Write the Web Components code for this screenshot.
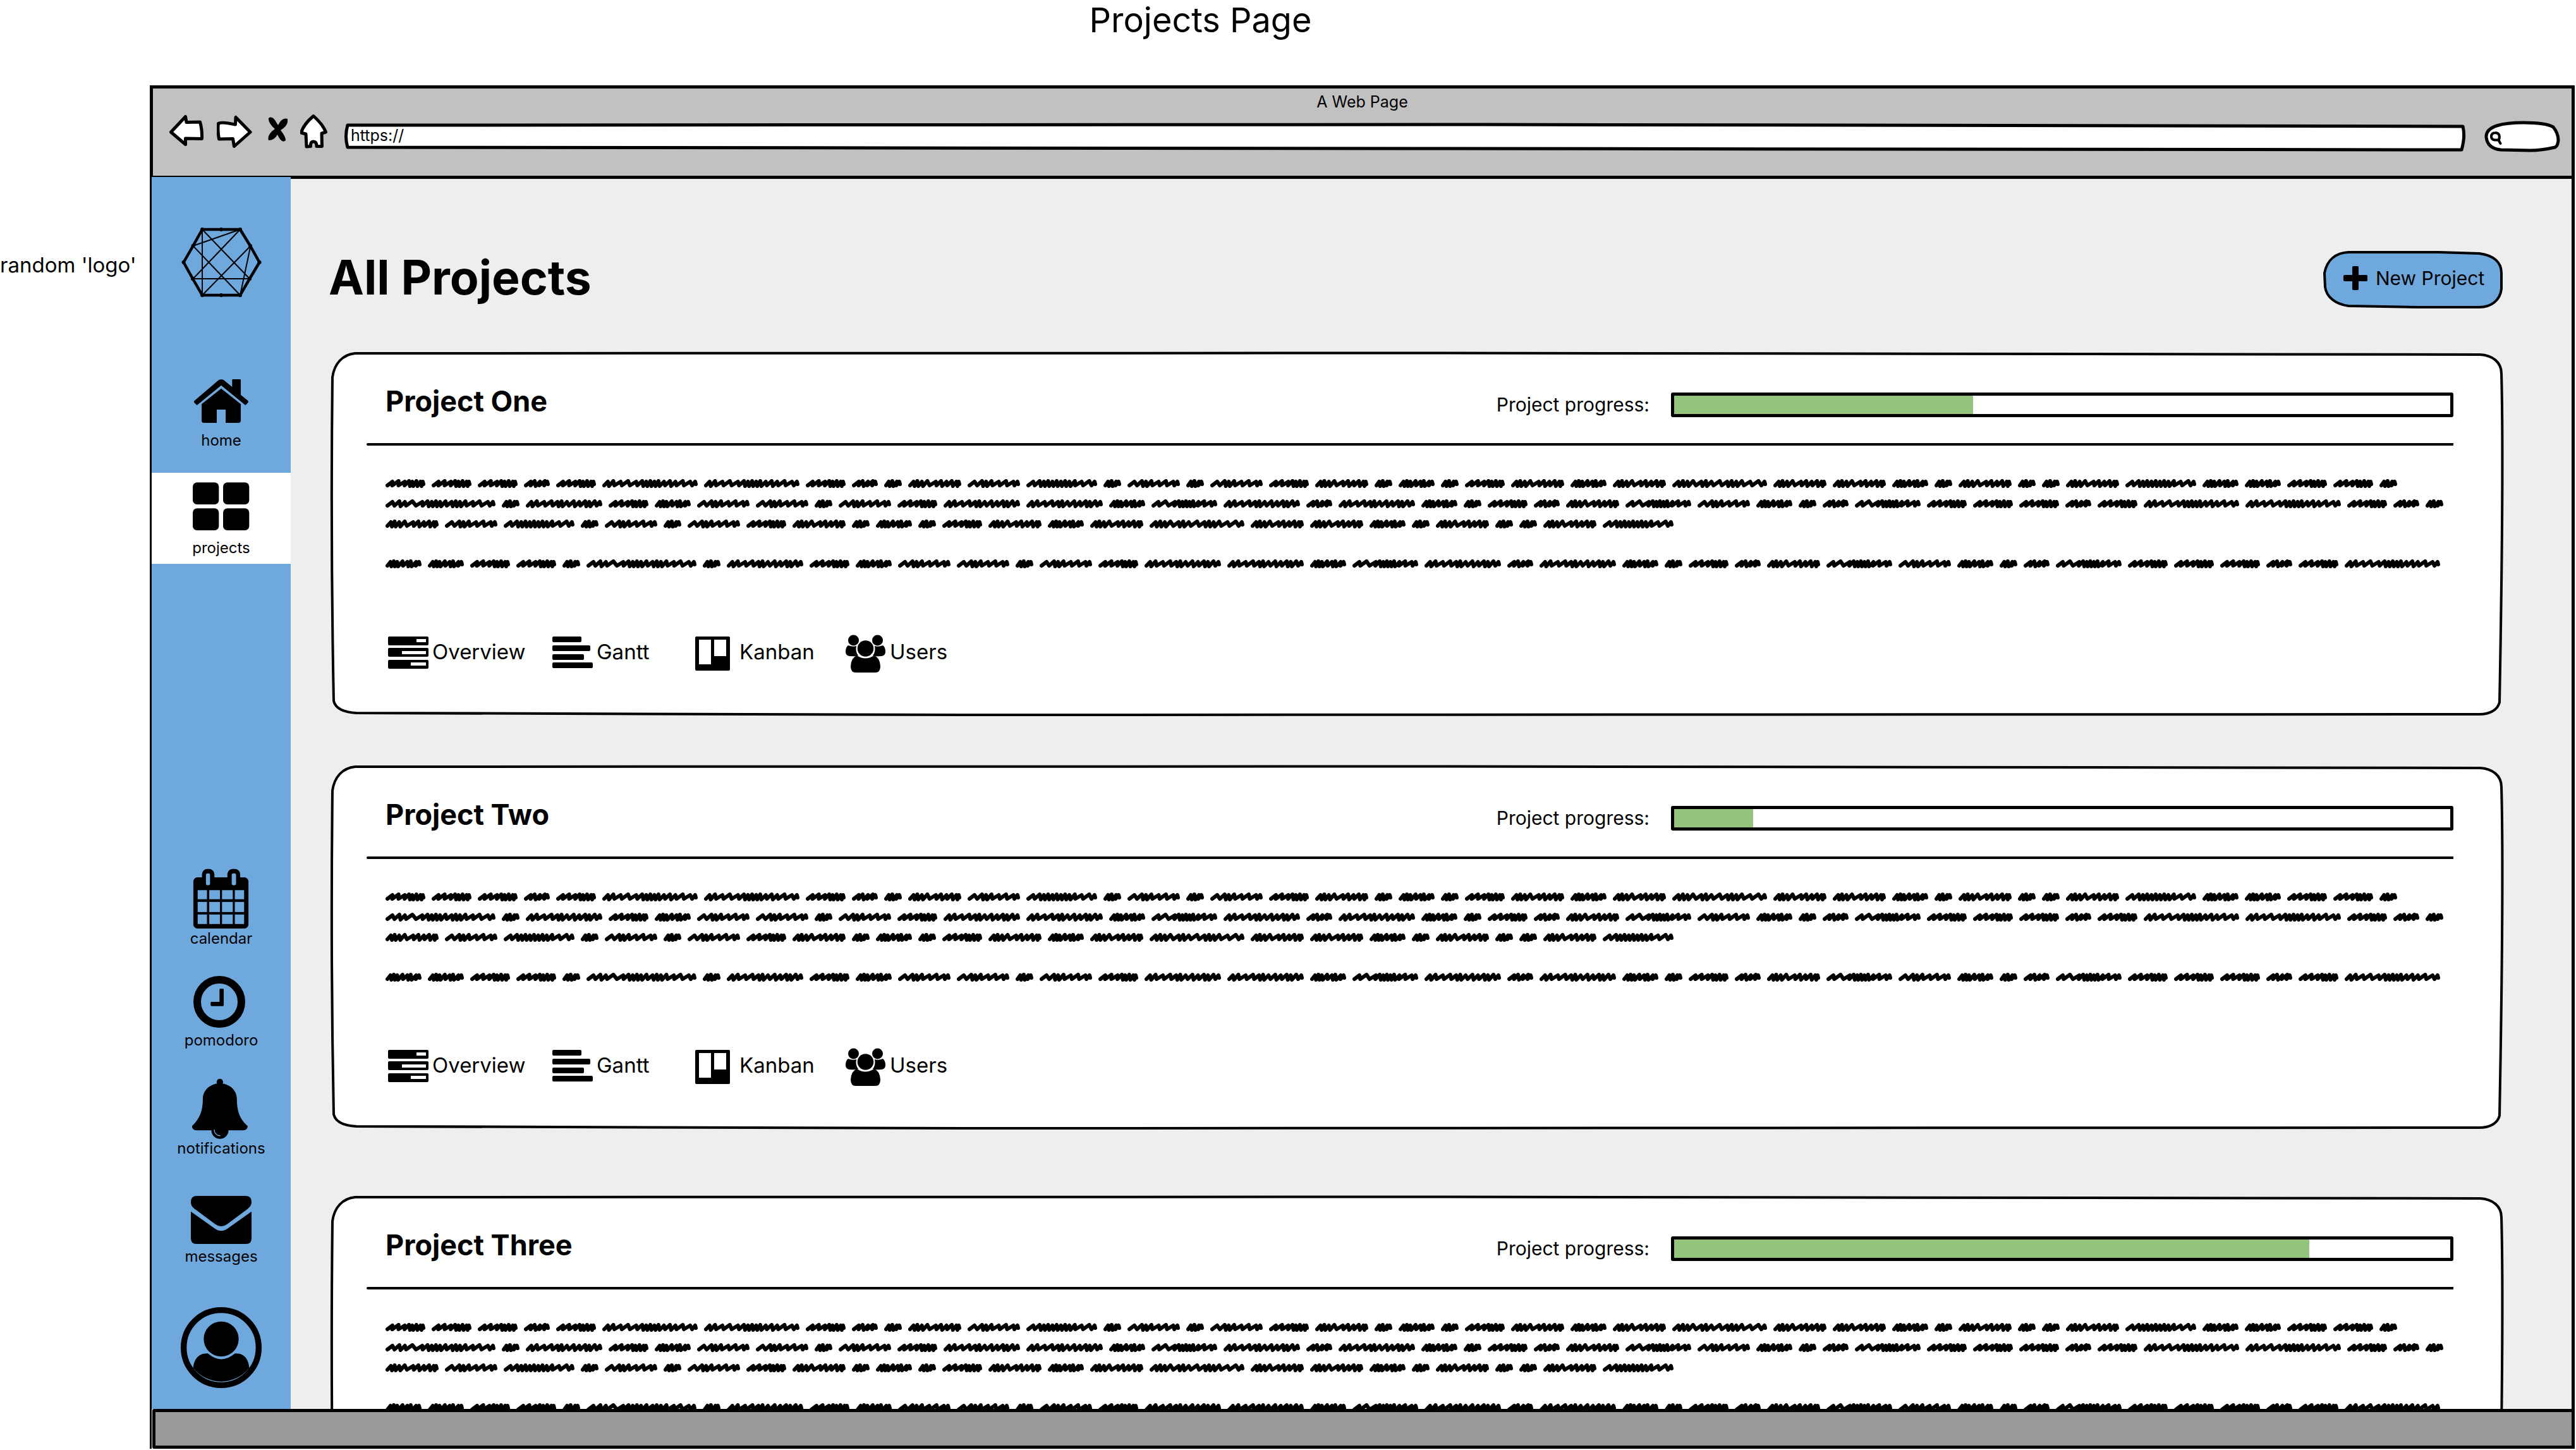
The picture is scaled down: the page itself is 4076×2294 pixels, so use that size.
<!DOCTYPE html>
<html lang="en">
<head>
<meta charset="utf-8">
<title>Projects Page</title>
<style>
  body { margin: 0; background: #fff; color: #000; font-family: Inter, "Liberation Sans", sans-serif; }
</style>
</head>
<body>
<wire-board heading="Projects Page" note="random 'logo'">
  <browser-window caption="A Web Page" address="https://">
    <side-nav slot="side"></side-nav>
    <page-heading text="All Projects"></page-heading>
    <project-card name="Project One" progress="38.5"></project-card>
    <project-card name="Project Two" progress="10.2"></project-card>
    <project-card class="later" name="Project Three" progress="81.8" preview></project-card>
  </browser-window>
</wire-board>

<script>
const BASE = `
  *, *::before, *::after { box-sizing: border-box; }
  svg { display: block; }
  a { color: inherit; text-decoration: none; }
  button, input { font: inherit; color: inherit; background: none; border: 0; margin: 0; padding: 0; }
`;

class Base extends HTMLElement {
  connectedCallback() {
    if (this.shadowRoot) return;
    this.attachShadow({ mode: 'open' }).innerHTML = `<style>${BASE}${this.css()}</style>${this.html()}`;
  }
  attr(name) { return this.getAttribute(name) || ''; }
}

/* Outline drawn behind slotted content; the shape stretches with its box. */
const FRAMES = {
  card: { box: '0 0 3436 575', line: 4, fill: '#fff',
    d: 'M38 2 L1700 1.5 L3400 4 C3420 5 3434 16 3434 34 Q3438 180 3431 554 C3428 566 3416 573 3399 573 L1000 574 L40 571 C20 570 7 564 4 552 Q-1 300 2 40 C5 18 18 4 38 2 Z' },
  button: { box: '0 0 284 91', line: 4, fill: '#6fa8dc',
    d: 'M40 2 L183 2 L247 4 C270 7 282 18 282 35 L282 60 C280 78 266 89 247 89 L150 89 L40 87 C18 84 5 72 3 57 L2 35 C6 14 20 3 40 2 Z' },
  url: { box: '0 0 3356 46', line: 5, fill: '#fff',
    d: 'M5 4 L1800 3 L3352 6 Q3356 22 3350 43 L1700 41 L5 39 Q0 22 5 4 Z' },
  search: { box: '0 0 119 49', line: 5, fill: '#fff',
    d: 'M3 26 C2 8 30 3 62 3 C84 3 100 5 109 10 Q117 20 117 31 Q116 40 112 42 Q90 47 72 47 L26 46 Q5 44 3 26 Z' }
};
class SketchFrame extends Base {
  css() { return `
    :host { display: block; position: relative; }
    svg { position: absolute; inset: 0; width: 100%; height: 100%; overflow: visible; }
    .in { position: relative; height: 100%; }`; }
  html() {
    const f = FRAMES[this.attr('shape')];
    return `<svg viewBox="${f.box}" preserveAspectRatio="none" aria-hidden="true">
      <path d="${f.d}" fill="${f.fill}" stroke="#000" stroke-width="${f.line}" stroke-linejoin="round" vector-effect="non-scaling-stroke"/></svg>
      <div class="in"><slot></slot></div>`;
  }
}

/* Placeholder copy: every letter names a scribbled word, given as width and stroke pitches. */
const WORDS = {
  a: [28, [5, 6, 8]],
  n: [41, [10, 5, 9, 8]],
  c: [57, [5, 5, 5, 10, 5, 5, 9]],
  w: [63, [9, 9, 9, 5, 5, 6, 6]],
  s: [83, [11, 5, 5, 9, 9, 9, 9]],
  d: [84, [5, 5, 6, 11, 9, 5, 9, 5, 6]],
  f: [104, [10, 13, 8, 5, 5, 5, 5, 5, 8, 9, 10]],
  g: [112, [9, 5, 5, 5, 5, 5, 5, 5, 5, 8, 9, 10]],
  h: [121, [5, 9, 9, 9, 5, 5, 10, 5, 9, 5, 5, 10]],
  p: [151, [5, 9, 9, 10, 9, 5, 5, 5, 5, 5, 9, 5, 9, 9, 10]],
  q: [150, [5, 5, 5, 10, 5, 5, 9, 9, 5, 5, 5, 9, 9, 10]],
  r: [174, [10, 5, 9, 12, 8, 5, 5, 5, 5, 9, 5, 5, 5, 9, 8, 10, 10]]
};
function scribble(key) {
  const [w, steps] = WORDS[key];
  const k = (w - 10) / steps.reduce((a, b) => a + b, 0);
  let x = 3, d = 'M3 10';
  steps.forEach((s, i) => {
    const p = s * k, dense = s < 7;
    const top = x + Math.min(p * 0.9, 8);
    d += ` L${top.toFixed(1)} ${i % 2 ? 3 : 4}`;
    x += p;
    d += ` L${(x + (dense ? 1 : -2)).toFixed(1)} ${dense ? 11 : 10}`;
  });
  d += ` L${w - 4} 4 L${w - 3} 8`;
  return `<svg width="${w}" height="14" viewBox="0 0 ${w} 14"><path d="${d}" fill="none" stroke="#000" stroke-width="6" stroke-linejoin="round" stroke-linecap="round"/></svg>`;
}
class ScribbleText extends Base {
  css() { return `:host { display: flex; flex-wrap: wrap; gap: 18px 10px; }`; }
  html() { return [...this.attr('words')].map(scribble).join(''); }
}

class WireBoard extends Base {
  css() { return `
    :host { display: flex; flex-direction: column; height: 100vh; overflow: hidden; }
    h1 { margin: 0; height: 135px; flex: none; padding-right: 277px; text-align: center; font-size: 54px; line-height: 64px; font-weight: 400; }
    .row { flex: 1; min-height: 0; display: flex; padding: 0 2px 2px 0; }
    p { margin: 0; flex: none; width: 237px; padding-top: 264px; font-size: 33px; line-height: 40px; white-space: nowrap; }
    ::slotted(*) { flex: 1; min-width: 0; }`; }
  html() { return `<h1>${this.attr('heading')}</h1><div class="row"><p>${this.attr('note')}</p><slot></slot></div>`; }
}

class BrowserWindow extends Base {
  css() { return `
    :host { display: flex; flex-direction: column; border: solid #000; border-width: 5px 5px 0 3px; background: #eee; }
    header { flex: none; height: 143px; background: #c1c1c1; border: solid #000; border-width: 0 0 5px 2px; }
    .cap { padding: 4px 0 2px; text-align: center; font-size: 25px; line-height: 34px; }
    .nav { display: flex; align-items: flex-end; gap: 20px; height: 60px; padding: 0 19px 0 26px; }
    .nav button { flex: none; display: block; }
    .nav .url { flex: 1; height: 46px; }
    .nav .find { flex: none; width: 119px; height: 49px; margin-left: 10px; }
    .find svg { position: absolute; left: 8px; top: 16px; }
    input { display: block; width: 100%; height: 100%; outline: 0; font-size: 25px; padding: 0 10px 7px; }
    .find input { padding-left: 32px; }
    .body { flex: 1; min-height: 0; display: flex; }
    ::slotted([slot=side]) { flex: none; width: 220px; margin-top: -3px; position: relative; }
    main { flex: 1; min-width: 0; overflow: hidden; padding: 114px 109px 0 64px; display: flex; flex-direction: column; gap: 79px; }
    main ::slotted(*) { flex: none; }
    main ::slotted(.later) { margin-top: 27px; }
    footer { flex: none; height: 63px; margin: 0 -5px 0 1px; border: 5px solid #000; border-radius: 3px; background: #999; position: relative; }`; }
  html() { return `
    <header>
      <div class="cap">${this.attr('caption')}</div>
      <div class="nav">
        <button aria-label="Back"><svg width="55" height="60" viewBox="268 180 55 60"><path d="M270.5 209 L293.5 184.5 L295 193.5 L316.5 193 Q320 205 319.5 219.5 L293.5 219 L293.5 228.500 Z" fill="#fff" stroke="#000" stroke-width="5" stroke-linejoin="round"/></svg></button>
        <button aria-label="Forward"><svg width="61" height="60" viewBox="343 180 61 60"><path d="M396 209 L373 185.500 L372.500 197 Q350 192 345.500 195.500 Q344 205 346.500 220 L368.500 219.500 L370.500 231.500 Z" fill="#fff" stroke="#000" stroke-width="5" stroke-linejoin="round"/></svg></button>
        <button aria-label="Stop"><svg width="31" height="60" viewBox="424 180 31 60"><path d="M425 187 Q431 182 438 195 L440 198 Q446 185 455 188 Q457 198 444 206 Q452 216 452 222 Q446 228 439 213 Q434 222 425 222 Q422 213 435 204 Q424 194 425 187Z"/></svg></button>
        <button aria-label="Home"><svg width="50" height="60" viewBox="475 180 50 60"><path d="M496 183.500 Q511 197 515.500 209 L509 211 L509.500 231.500 L501 231.500 Q501 224 496 224 Q491 224 491.500 231.500 L485 232 L484 212 L476.500 210 Q480 197 496 183.500 Z" fill="#fff" stroke="#000" stroke-width="5" stroke-linejoin="round"/></svg></button>
        <sketch-frame class="url" shape="url"><input type="text" aria-label="Address" value="${this.attr('address')}"></sketch-frame>
        <sketch-frame class="find" shape="search"><svg width="22" height="24" viewBox="0 0 22 24" aria-hidden="true"><path d="M10 3 C4 3 3 6 3 9 C3 14 7 15 15 14.500 Q18 4 10 3 M14 14 L17.500 20" fill="none" stroke="#000" stroke-width="4" stroke-linecap="round" stroke-linejoin="round"/></svg><input type="search" aria-label="Search"></sketch-frame>
      </div>
    </header>
    <div class="body"><slot name="side"></slot><main><slot></slot></main></div>
    <footer></footer>`; }
}

class NavItem extends Base {
  css() { return `
    :host { display: block; }
    a { display: flex; flex-direction: column; align-items: center; padding: 8px 0 10px; font-size: 24px; line-height: 30px; }
    a[aria-current] { background: #fff; }`; }
  html() { return `<a href="#${this.attr('label')}" ${this.hasAttribute('current') ? 'aria-current="page"' : ''}><slot></slot><span>${this.attr('label')}</span></a>`; }
}

class SideNav extends Base {
  css() {
    return `
    :host { display: flex; flex-direction: column; background: #6fa8dc; padding: 79px 0 33px; }
    .logo { margin: 0 auto 107px; }
    nav { display: flex; flex-direction: column; gap: 27px; }
    .top { gap: 26px; }
    .low { margin-top: auto; }
    .low nav-item:first-child { margin-bottom: -10px; }
    .me { margin: 55px auto 0; }`; }
  html() {
    let cells = '';
    for (const [x, w] of [[246, 45], [302, 52], [364, 52], [426, 45]])
      for (const [y, h] of [[177, 44], [234, 49], [295, 46]])
        cells += `<rect x="${x}" y="${y}" width="${w}" height="${h}"/>`;
    return `
    <svg class="logo" width="128" height="112" viewBox="285 359 128 112" fill="none" stroke="#000" stroke-linejoin="round">
      <path stroke-width="2" d="M319 363 V467 M319 363 L394 441 M379 363 L304.500 389 M379 363 L304.500 441 M304.500 389 L379 467 M395.500 389 L319 467 M395.500 389 L379 467 M304.500 441 H394"/>
      <path stroke-width="4.500" d="M319 363 H379 L395 389 L409.500 415 L394 441 L379 467 H319 L304 441 L289.500 415 L304.500 389 Z"/>
      <path stroke-width="6" stroke-linecap="round" d="M319 363h0M349 363h0M379 363h0M395 389h0M409.500 415h0M394 441h0M379 467h0M349 467h0M319 467h0M304 441h0M289.500 415h0M304.500 389h0"/>
    </svg>
    <nav class="top" aria-label="Main">
      <nav-item label="home"><svg width="96" height="96" viewBox="216 78 288 288"><path d="M232 223 L348 124 Q360 117 372 124 L412 157 V124 Q412 120 416 120 H449 Q453 120 453 124 V194 L487 222 Q491 226 487 231 L479 240 Q475 244 471 240 L360 149 L249 240 Q245 244 241 240 L232 231 Q229 227 232 223Z"/><path d="M360 164 L453 238 V316 Q453 327 442 327 H381 V264 H339 V327 H277 Q267 327 267 316 V238Z"/></svg></nav-item>
      <nav-item label="projects" current><svg width="96" height="96" viewBox="216 588 288 288"><rect x="225" y="610" width="124" height="104" rx="20"/><rect x="369" y="610" width="124" height="104" rx="20"/><rect x="225" y="733" width="124" height="104" rx="20"/><rect x="369" y="733" width="124" height="104" rx="20"/></svg></nav-item>
    </nav>
    <nav class="low" aria-label="Tools">
      <nav-item label="calendar"><svg width="96" height="96" viewBox="216 72 288 294"><rect x="225" y="115" width="267" height="248" rx="20"/><rect x="267" y="74" width="60" height="90" rx="26"/><rect x="390" y="74" width="62" height="90" rx="26"/><g fill="#6fa8dc"><rect x="286" y="96" width="20" height="57" rx="8"/><rect x="411" y="96" width="21" height="57" rx="8"/>${cells}</g></svg></nav-item>
      <nav-item label="pomodoro"><svg width="96" height="96" viewBox="216 555 288 288"><circle cx="351" cy="705" r="105" fill="none" stroke="#000" stroke-width="36"/><path d="M356 643 H368 Q372 643 372 647 V721 Q372 725 368 725 H314 Q310 725 310 721 V709 Q310 705 314 705 H352 V647 Q352 643 356 643Z"/></svg></nav-item>
      <nav-item label="notifications"><svg width="96" height="96" viewBox="216 1068 288 291"><circle cx="353.500" cy="1086" r="15.500"/><path d="M272 1165 C272 1125 308 1092 353 1092 C400 1092 435 1125 435 1165 C435 1230 452 1267 487 1297 Q487 1317 466 1317 H241 Q220 1317 220 1297 C255 1262 272 1230 272 1165Z"/><circle cx="354" cy="1317" r="41"/><path d="M327 1314 A27 27 0 0 0 356 1343" fill="none" stroke="#6fa8dc" stroke-width="4"/></svg></nav-item>
      <nav-item label="messages"><svg width="96" height="96" viewBox="210 81 288 288"><path d="M210 156 Q210 126 236 126 H472 Q498 126 498 156 C498 170 488 182 474 192 L382 260 Q354 281 326 260 L234 192 C218 182 210 170 210 156Z"/><path d="M210 200 L322 280 Q354 304 386 280 L498 200 V328 Q498 354 472 354 H236 Q210 354 210 328Z"/></svg></nav-item>
    </nav>
    <a class="me" href="#profile" aria-label="Profile"><svg width="128" height="128" viewBox="162 654 384 384"><circle cx="354" cy="846" r="178" fill="none" stroke="#000" stroke-width="28"/><circle cx="354" cy="805" r="83"/><path d="M221 943 C224 905 245 870 291 874 Q354 929 419 874 C465 870 485 905 487 943 A170 170 0 0 1 221 943Z"/></svg></a>`;
  }
}

class PageHeading extends Base {
  css() { return `
    :host { display: flex; justify-content: space-between; align-items: flex-start; margin: 0 0 -10px -4px; }
    h2 { margin: 0; font-size: 75px; line-height: 84px; font-weight: 700; }
    sketch-frame { width: 284px; height: 91px; }
    button { display: flex; align-items: center; gap: 13px; width: 100%; height: 100%; padding: 0 0 5px 32px; font-size: 30px; white-space: nowrap; }`; }
  html() { return `<h2>${this.attr('text')}</h2>
    <sketch-frame shape="button"><button><svg width="38" height="38" viewBox="0 0 38 38" aria-hidden="true"><rect y="14" width="38" height="10" rx="2"/><rect x="14" width="10" height="38" rx="2"/></svg>New Project</button></sketch-frame>`; }
}

const LINKS = [
  ['Overview', '<svg width="64" height="60" viewBox="0 -3 64 60"><rect width="64" height="14" rx="2"/><rect y="18" width="64" height="14" rx="2"/><rect y="37" width="64" height="14" rx="2"/><g fill="#fff"><rect x="45" y="4" width="15" height="5"/><rect x="22" y="23" width="38" height="5"/><rect x="36" y="41" width="24" height="5"/></g></svg>'],
  ['Gantt', '<svg width="64" height="60" viewBox="0 -3 64 60"><rect width="46" height="9" rx="2"/><rect y="14" width="60" height="9" rx="2"/><rect y="28" width="50" height="9" rx="2"/><rect y="41" width="64" height="9" rx="2"/></svg>'],
  ['Kanban', '<svg width="64" height="60" viewBox="0 -3 64 60"><path fill-rule="evenodd" d="M2 0H53Q55 0 55 2V52Q55 54 53 54H2Q0 54 0 52V2Q0 0 2 0ZM6 5V44H25V5ZM30 5V31H49V5Z"/></svg>'],
  ['Users', '<svg width="64" height="60" viewBox="0 0 64 60"><circle cx="12.500" cy="9" r="8.500"/><circle cx="50.500" cy="9" r="8.500"/><circle cx="31.500" cy="22" r="12.800"/><path d="M4 17 Q11 20 17 18 Q15 27 20 33 Q17 35 6 34 Q0 33 0 27 Q0 20 4 17Z"/><path d="M59 17 Q52 20 46 18 Q48 27 43 33 Q46 35 57 34 Q63 33 63 27 Q63 20 59 17Z"/><path d="M18 33 Q31 42 45 33 Q54 36 55 50 Q55 60 47 60 H16 Q8 60 8 50 Q9 36 18 33Z"/></svg>']
];
const INTRO = 'wwwnwppwnadsgasaswdacawdcdqddcadaadgccwwarahwcssaswhhcfhnhcawndfscanfwwwnwppwnadsgasaswdacawdcdqddcadaadg';
const MORE = 'ccwwarahwcssaswhhcfhnhcawndfscanfwwwnwp';

class ProjectCard extends Base {
  css() { return `
    :host { display: block; }
    .head { display: flex; justify-content: space-between; align-items: baseline; padding: 51px 78px 39px 86px; }
    h3 { margin: 0; font-size: 45px; line-height: 54px; font-weight: 700; }
    .meter { display: flex; align-items: center; gap: 34px; }
    label { font-size: 30px; line-height: 38px; white-space: nowrap; }
    progress { appearance: none; flex: none; width: 1238px; height: 39px; border: 5px solid #000; border-radius: 3px; background: #fff; }
    progress::-webkit-progress-bar { background: #fff; }
    progress::-webkit-progress-value { background: #93c47d; }
    hr { height: 4px; margin: 0 78px 0 56px; border: 0; background: #000; border-radius: 20px 4px 4px 20px; }
    .copy { padding: 53px 80px 0 86px; display: flex; flex-direction: column; gap: 49px; }
    ul { list-style: none; margin: 0; min-height: 233px; padding: 105px 0 68px 90px; display: grid; grid-template-columns: 260px 226px 238px auto; justify-content: start; }
    a { display: flex; gap: 6px; height: 60px; font-size: 33px; line-height: 54px; }`; }
  html() {
    const links = this.hasAttribute('preview') ? [] : LINKS;
    return `<sketch-frame shape="card">
    <div class="head"><h3>${this.attr('name')}</h3>
      <div class="meter"><label for="p">Project progress:</label><progress id="p" max="100" value="${this.attr('progress')}"></progress></div></div>
    <hr>
    <div class="copy"><scribble-text words="${INTRO}"></scribble-text><scribble-text words="${MORE}"></scribble-text></div>
    <ul>${links.map(([t, i]) => `<li><a href="#${t.toLowerCase()}">${i}<span>${t}</span></a></li>`).join('')}</ul>
  </sketch-frame>`; }
}

customElements.define('sketch-frame', SketchFrame);
customElements.define('scribble-text', ScribbleText);
customElements.define('nav-item', NavItem);
customElements.define('side-nav', SideNav);
customElements.define('page-heading', PageHeading);
customElements.define('project-card', ProjectCard);
customElements.define('browser-window', BrowserWindow);
customElements.define('wire-board', WireBoard);
</script>
</body>
</html>
